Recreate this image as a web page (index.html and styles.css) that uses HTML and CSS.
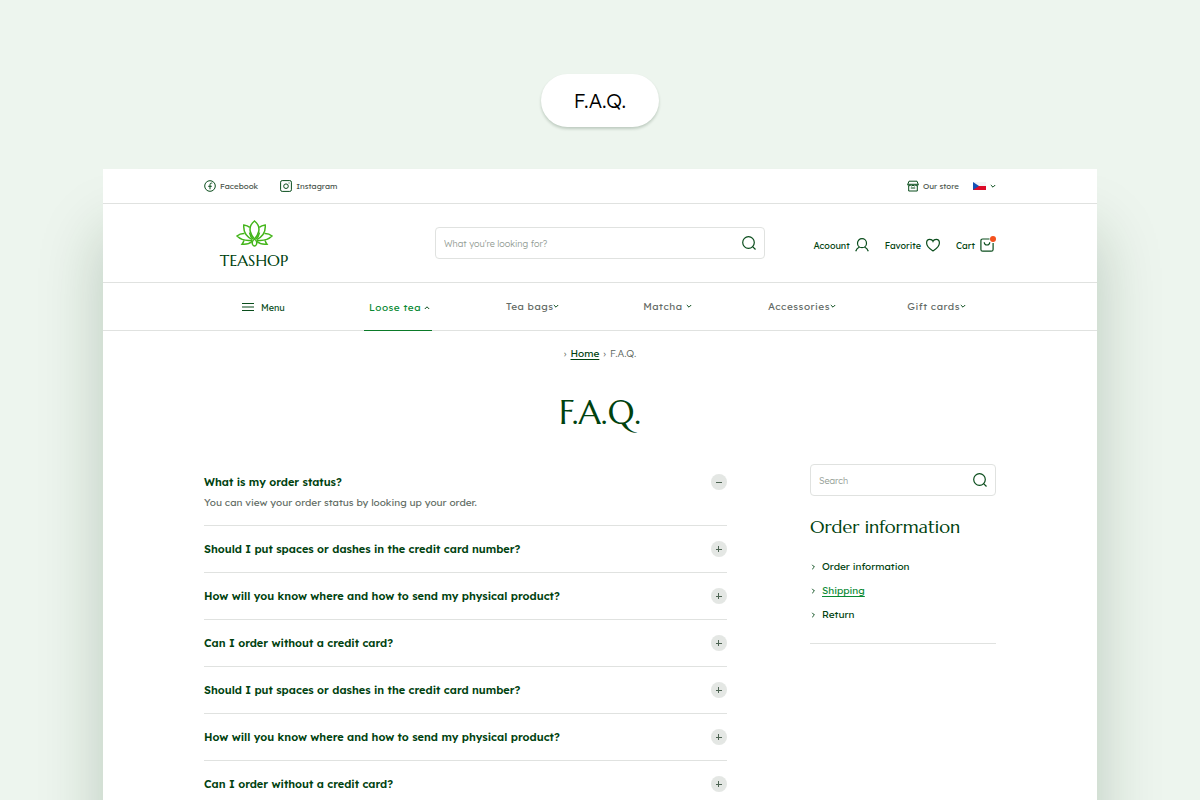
FILE: index.html
```html
<!DOCTYPE html>
<html lang="en">
<head>
  <meta charset="UTF-8">
  <meta name="viewport" content="width=device-width, initial-scale=1">
  <title>F.A.Q. | Teashop</title>
  <link rel="stylesheet" href="styles.css">
</head>
<body>

  <svg class="sprite" aria-hidden="true">
    <symbol id="chevron" viewBox="0 0 6 6"><path d="M.8 2L3 4.200 5.200 2"/></symbol>
    <symbol id="arrow" viewBox="0 0 6 6"><path d="M2.200.8L4.400 3 2.200 5.200"/></symbol>
    <symbol id="search" viewBox="0 0 14 14"><circle cx="6.5" cy="6.5" r="5.8"/><path d="M10.600 10.600l2.900 2.900"/></symbol>
  </svg>

  <div class="label">F.A.Q.</div>

  <div class="page">

    <div class="topbar">
      <div class="container topbar-inner">
        <div class="social">
          <a href="#">
            <svg class="icon-small" viewBox="0 0 12 12"><circle cx="6" cy="6" r="5.3"/><path d="M8.3 3.1H7.4Q6 3.1 6 4.6V9.3M4.2 6.3h3.6"/></svg>
            Facebook
          </a>
          <a href="#">
            <svg class="icon-small" viewBox="0 0 12 12"><rect x=".6" y=".6" width="10.8" height="10.8" rx="1.6"/><circle cx="6" cy="6.2" r="2.3"/><path d="M8.6 3h.9"/></svg>
            Instagram
          </a>
        </div>
        <div class="store">
          <a href="#">
            <svg class="icon-small" viewBox="0 0 12 12"><path d="M2 1.200h8l1.300 3.300v.6q-1 1.500-2.600.2-1.300 1.200-2.700 0-1.400 1.200-2.700 0-1.600 1.300-2.600-.2v-.6zM.9 4.300h10.200M1.700 6v5h8.600V6M3.800 8h4.400"/></svg>
            Our store
          </a>
          <button class="language" type="button" aria-label="Language">
            <svg class="flag" viewBox="0 0 13 8"><path fill="#f4f4f6" d="M0 0h13v4H0z"/><path fill="#dc0a28" d="M0 4h13v4H0z"/><path fill="#1450b4" d="M0 0l6 4-6 4z"/></svg>
            <svg class="chevron"><use href="#chevron"/></svg>
          </button>
        </div>
      </div>
    </div>

    <header class="header">
      <div class="container header-inner">
        <a class="logo" href="#">
          <svg class="lotus" viewBox="0 0 37 27">
            <path d="M18.500 1C14.800 4 13.400 7.500 14.300 11.500 15 14.500 16.500 17 18.500 19 20.500 17 22 14.500 22.700 11.500 23.600 7.500 22.200 4 18.500 1z"/>
            <path d="M13.800 7.300C12 5.900 10 5.300 7.800 5 7.300 10.500 9 16 16.400 19.600M23.200 7.300C25 5.900 27 5.300 29.200 5 29.700 10.500 28 16 20.600 19.600"/>
            <path d="M13.500 12.500Q14.300 16.500 17 19M23.500 12.500Q22.700 16.500 20 19"/>
            <path d="M8.600 13.500C5.800 13.300 3 14.300 1 16 4.500 19.500 9.500 21 16 20.200M28.400 13.500C31.200 13.300 34 14.300 36 16 32.500 19.500 27.500 21 21 20.200"/>
            <path d="M8 20.400Q7.400 22.500 6 24.200 12 25 16.300 21.300M29 20.400Q29.600 22.500 31 24.200 25 25 20.700 21.300"/>
            <path d="M18.500 19C16.500 20.500 15.800 22.800 16.600 24.500 17.100 25.500 17.800 26 18.500 26 19.200 26 19.900 25.500 20.400 24.500 21.200 22.800 20.500 20.500 18.500 19z"/>
          </svg>
          TEASHOP
        </a>
        <form class="search">
          <input type="text" placeholder="What you're looking for?" aria-label="Search products">
          <button type="submit" aria-label="Search"><svg class="icon-search"><use href="#search"/></svg></button>
        </form>
        <div class="actions">
          <a href="#">
            Acoount
            <svg class="icon" viewBox="0 0 14 14"><circle cx="7" cy="5.200" r="4.500"/><path d="M.7 13.200Q1.700 10.200 4.600 9M13.300 13.200Q12.300 10.200 9.400 9"/></svg>
          </a>
          <a href="#">
            Favorite
            <svg class="icon" viewBox="0 0 14 14"><path d="M7 12.900C3 10.400.6 7.600.6 4.900.6 2.700 2 1.300 3.800 1.300 5.300 1.300 6.500 2 7 3.300 7.500 2 8.700 1.300 10.200 1.300 12 1.300 13.400 2.700 13.400 4.900 13.400 7.600 11 10.400 7 12.900z"/></svg>
          </a>
          <a href="#">
            Cart
            <svg class="icon" viewBox="0 0 14 14"><path d="M9.500 1H2.700Q.9 1 .9 2.800V11.400Q.9 13.200 2.700 13.200H11.300Q13.100 13.200 13.100 11.400V5"/><path d="M4.200 4.200Q4.500 7 7 7T9.800 4.200"/></svg>
            <span class="dot"></span>
          </a>
        </div>
      </div>
    </header>

    <nav class="nav">
      <div class="nav-inner">
        <a class="menu" href="#">
          <svg class="burger" viewBox="0 0 12 10"><path d="M0 1.500h12M0 5h12M0 8.500h12"/></svg>
          Menu
        </a>
        <a class="spaced active" href="#">Loose tea <svg class="chevron up"><use href="#chevron"/></svg></a>
        <a href="#">Tea bags<svg class="chevron"><use href="#chevron"/></svg></a>
        <a class="spaced" href="#">Matcha <svg class="chevron"><use href="#chevron"/></svg></a>
        <a href="#">Accessories<svg class="chevron"><use href="#chevron"/></svg></a>
        <a href="#">Gift cards<svg class="chevron"><use href="#chevron"/></svg></a>
      </div>
    </nav>

    <main class="container">
      <div class="breadcrumb">
        <span>›</span> <a href="#">Home</a> <span>›</span> <span>F.A.Q.</span>
      </div>
      <h1>F.A.Q.</h1>

      <div class="content">
        <section class="faq">
          <details open>
            <summary>What is my order status? <span class="toggle"></span></summary>
            <p>You can view your order status by looking up your order.</p>
          </details>
          <details>
            <summary>Should I put spaces or dashes in the credit card number? <span class="toggle"></span></summary>
          </details>
          <details>
            <summary>How will you know where and how to send my physical product? <span class="toggle"></span></summary>
          </details>
          <details>
            <summary>Can I order without a credit card? <span class="toggle"></span></summary>
          </details>
          <details>
            <summary>Should I put spaces or dashes in the credit card number? <span class="toggle"></span></summary>
          </details>
          <details>
            <summary>How will you know where and how to send my physical product? <span class="toggle"></span></summary>
          </details>
          <details>
            <summary>Can I order without a credit card? <span class="toggle"></span></summary>
          </details>
        </section>

        <aside class="sidebar">
          <form class="search">
            <input type="text" placeholder="Search" aria-label="Search questions">
            <button type="submit" aria-label="Search"><svg class="icon-search"><use href="#search"/></svg></button>
          </form>
          <h2>Order information</h2>
          <ul>
            <li><svg class="arrow"><use href="#arrow"/></svg><a href="#">Order information</a></li>
            <li><svg class="arrow"><use href="#arrow"/></svg><a class="current" href="#">Shipping</a></li>
            <li><svg class="arrow"><use href="#arrow"/></svg><a href="#">Return</a></li>
          </ul>
        </aside>
      </div>
    </main>

  </div>

</body>
</html>
```

FILE: styles.css
```css
* {
  box-sizing: border-box;
}

body {
  margin: 0;
  padding: 74px 103px 0;
  min-height: 100vh;
  background: #edf5ee;
  color: #00420f;
  font-family: Lexend, Inter, sans-serif;
  font-size: 10px;
  display: flex;
  flex-direction: column;
}

a {
  color: inherit;
  text-decoration: none;
}

button {
  padding: 0;
  border: none;
  background: none;
  color: inherit;
  cursor: pointer;
}

svg {
  display: block;
  flex: none;
  fill: none;
  stroke: #0a4d1c;
  stroke-width: 1.2;
}

.sprite {
  position: absolute;
  width: 0;
  height: 0;
}

.label {
  align-self: center;
  padding: 0 33px;
  border-radius: 27px;
  background: #fff;
  box-shadow: 0 2px 3px rgba(0, 40, 10, 0.2);
  color: #000;
  font-size: 20px;
  font-weight: 300;
  line-height: 53px;
}

.page {
  flex: 1;
  margin-top: 42px;
  background: #fff;
  box-shadow: 0 64px 60px rgba(0, 50, 15, 0.22);
}

.container {
  padding: 0 101px;
}

/* top bar */
.topbar {
  border-bottom: 1px solid #e0e2e0;
}

.topbar-inner {
  display: flex;
  justify-content: space-between;
  height: 34px;
  color: #4a544c;
  font-size: 8px;
}

.social,
.store,
.topbar a,
.language {
  display: flex;
  align-items: center;
}

.social {
  gap: 22px;
}

.store {
  gap: 14px;
}

.topbar a,
.language {
  gap: 4px;
}

.icon-small {
  width: 12px;
  height: 12px;
  stroke-width: 1;
}

.flag {
  width: 13px;
  height: 8px;
  stroke: none;
}

.chevron,
.arrow {
  width: 6px;
  height: 6px;
  stroke-width: 1;
}

.up {
  transform: rotate(180deg);
}

/* header */
.header {
  border-bottom: 1px solid #e0e2e0;
}

.header-inner {
  display: grid;
  grid-template-columns: 231px 330px 1fr;
  align-items: center;
  height: 78px;
}

.logo {
  width: 100px;
  padding-top: 2px;
  display: flex;
  flex-direction: column;
  align-items: center;
  gap: 4px;
  font-family: Marcellus, "Liberation Serif", serif;
  font-size: 16px;
  line-height: 18px;
}

.lotus {
  width: 37px;
  height: 27px;
  stroke: #43b51a;
  stroke-width: 1.5;
}

.search {
  display: flex;
  align-items: center;
  height: 32px;
  padding: 0 8px;
  border: 1px solid #e0e2e0;
  border-radius: 4px;
}

.search input {
  flex: 1;
  min-width: 0;
  padding: 0;
  border: none;
  outline: none;
  background: none;
  font: inherit;
  font-size: 9px;
  font-weight: 300;
}

.search input::placeholder {
  color: #929c94;
}

.icon-search {
  width: 14px;
  height: 14px;
}

.actions {
  display: flex;
  justify-content: flex-end;
  gap: 16px;
  padding-right: 2px;
  padding-top: 4px;
  font-size: 9px;
}

.actions a {
  position: relative;
  display: flex;
  align-items: center;
  gap: 5px;
}

.icon {
  width: 14px;
  height: 14px;
}

.dot {
  position: absolute;
  top: -2px;
  right: -2px;
  width: 6px;
  height: 6px;
  border-radius: 50%;
  background: #f4511e;
}

/* navigation */
.nav {
  border-bottom: 1px solid #e0e2e0;
}

.nav-inner {
  padding: 0 93px;
  margin-bottom: -1px;
  display: grid;
  grid-template-columns: repeat(6, 1fr);
  justify-items: center;
}

.nav a {
  display: flex;
  align-items: center;
  height: 48px;
  padding-bottom: 2px;
  color: #646b66;
  letter-spacing: 0.5px;
}

.nav .spaced {
  gap: 3px;
}

.nav .menu {
  gap: 7px;
  padding-bottom: 0;
  color: #0a4d1c;
  font-size: 9px;
  letter-spacing: normal;
}

.nav .active {
  padding: 2px 2px 0 5px;
  border-bottom: 1px solid #0a7a28;
  color: #0a8a34;
}

.burger {
  width: 12px;
  height: 10px;
}

/* title */
.breadcrumb {
  display: flex;
  justify-content: center;
  gap: 4px;
  padding-top: 16px;
  color: #5c665e;
  font-weight: 300;
  line-height: 14px;
}

.breadcrumb a {
  color: #00420f;
  font-weight: 400;
  text-decoration: underline;
  text-underline-offset: 2px;
}

h1,
h2 {
  margin: 0;
  font-family: Marcellus, "Liberation Serif", serif;
  font-weight: 400;
}

h1 {
  margin: 32px 0 31px;
  font-size: 33px;
  line-height: 40px;
  text-align: center;
}

/* questions */
.content {
  display: grid;
  grid-template-columns: 66% 186px;
  justify-content: space-between;
  align-items: start;
}

.faq details {
  padding: 15px 0;
  border-bottom: 1px solid #e0e2e0;
}

.faq details:first-child {
  padding: 10px 0 14px;
}

.faq summary {
  display: flex;
  justify-content: space-between;
  align-items: center;
  font-size: 11px;
  font-weight: 600;
  line-height: 16px;
  list-style: none;
  cursor: pointer;
}

.faq p {
  margin: 5px 0 0;
  color: #646e66;
  font-size: 10px;
  line-height: 16px;
}

.toggle {
  width: 16px;
  height: 16px;
  border-radius: 50%;
  background:
    linear-gradient(#4d6352, #4d6352) center / 6px 1px no-repeat,
    linear-gradient(#4d6352, #4d6352) center / 1px 6px no-repeat,
    #e4e7e4;
}

details[open] .toggle {
  background:
    linear-gradient(#4d6352, #4d6352) center / 6px 1px no-repeat,
    #e4e7e4;
}

/* sidebar */
.sidebar {
  padding-bottom: 20px;
  border-bottom: 1px solid #e0e2e0;
}

h2 {
  margin: 19px 0 20px;
  font-size: 18px;
  line-height: 24px;
}

.sidebar ul {
  display: grid;
  gap: 8px;
  margin: 0;
  padding: 0;
  list-style: none;
}

.sidebar li {
  display: flex;
  align-items: center;
  gap: 6px;
  line-height: 16px;
}

.sidebar .current {
  color: #0a8a34;
  text-decoration: underline;
  text-underline-offset: 2px;
}
```
